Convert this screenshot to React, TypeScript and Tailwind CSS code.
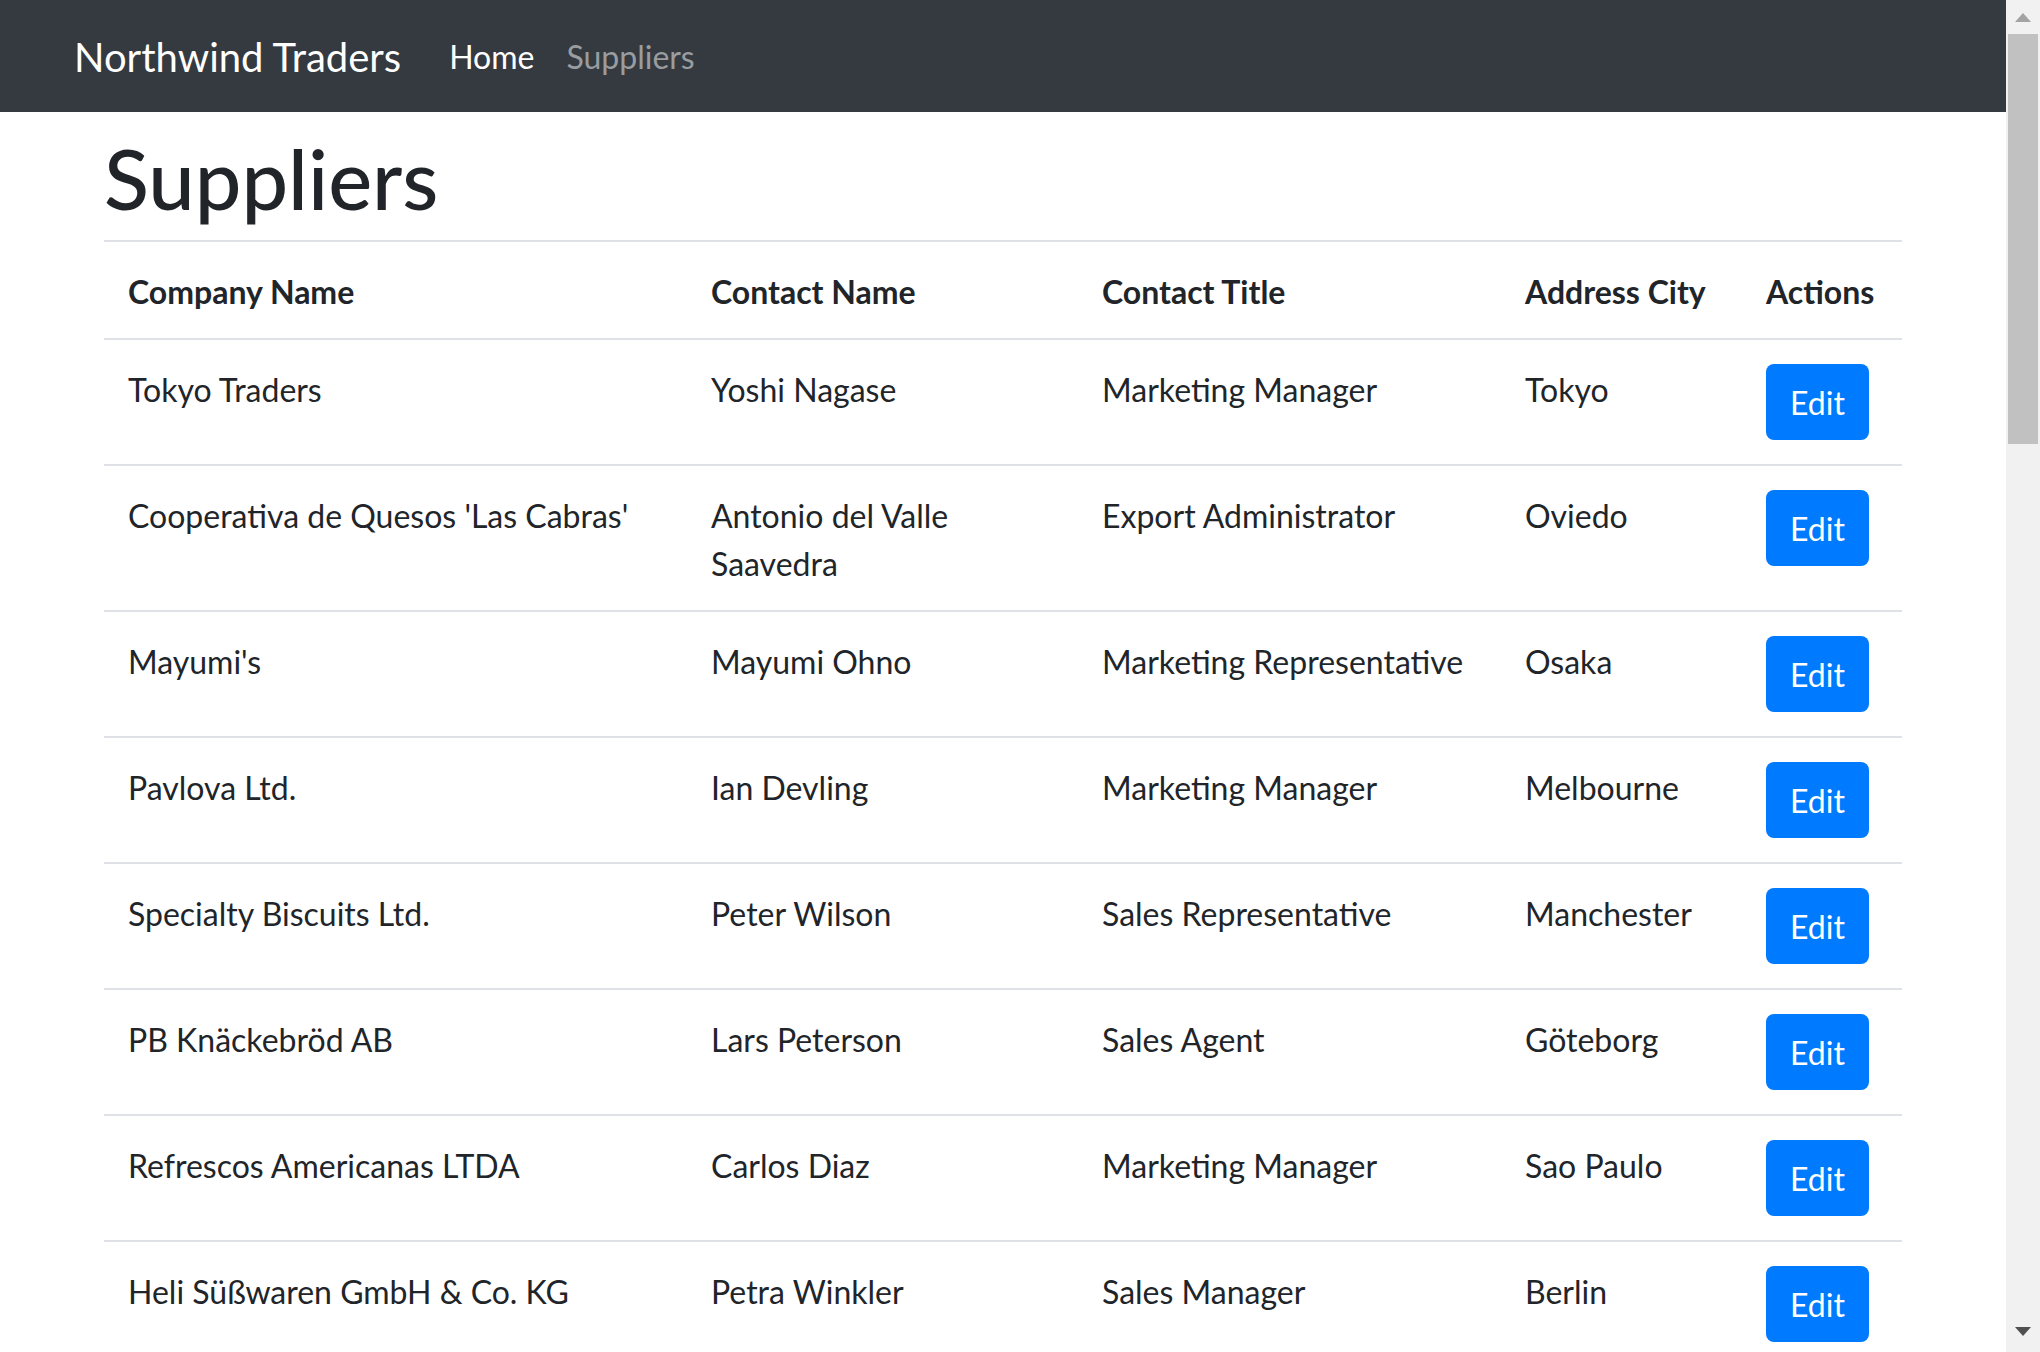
import React from "react";

type Supplier = { company: string; contact: string; title: string; city: string };

const suppliers: Supplier[] = [
  { company: "Tokyo Traders", contact: "Yoshi Nagase", title: "Marketing Manager", city: "Tokyo" },
  { company: "Cooperativa de Quesos 'Las Cabras'", contact: "Antonio del Valle Saavedra", title: "Export Administrator", city: "Oviedo" },
  { company: "Mayumi's", contact: "Mayumi Ohno", title: "Marketing Representative", city: "Osaka" },
  { company: "Pavlova Ltd.", contact: "Ian Devling", title: "Marketing Manager", city: "Melbourne" },
  { company: "Specialty Biscuits Ltd.", contact: "Peter Wilson", title: "Sales Representative", city: "Manchester" },
  { company: "PB Knäckebröd AB", contact: "Lars Peterson", title: "Sales Agent", city: "Göteborg" },
  { company: "Refrescos Americanas LTDA", contact: "Carlos Diaz", title: "Marketing Manager", city: "Sao Paulo" },
  { company: "Heli Süßwaren GmbH & Co. KG", contact: "Petra Winkler", title: "Sales Manager", city: "Berlin" },
];

const grid = "grid grid-cols-[583px_391px_423px_241px_160px]";
const cell = "px-[24px] pt-[26px] pb-[22px]";

function Scrollbar() {
  return (
    <div className="w-[34px] shrink-0 h-full bg-[#f1f1f1] flex flex-col items-center">
      <svg className="mt-[13px]" width="16" height="9" viewBox="0 0 16 9">
        <polygon points="8,0 16,9 0,9" fill="#a3a3a3" />
      </svg>
      <div className="mt-[12px] w-[30px] h-[410px] bg-[#c1c1c1]" />
      <div className="flex-1" />
      <svg className="mb-[16px]" width="16" height="9" viewBox="0 0 16 9">
        <polygon points="0,0 16,0 8,9" fill="#505050" />
      </svg>
    </div>
  );
}

export default function App() {
  return (
    <div className="h-screen w-full flex overflow-hidden bg-white text-[#212529] font-['Lato',_sans-serif]">
      <div className="flex-1 min-w-0 h-full flex flex-col">
        <nav className="h-[112px] shrink-0 bg-[#343a40] flex items-center pl-[74px] pt-[2px]">
          <span className="text-[40px] leading-[60px] text-white mr-[32px]">Northwind Traders</span>
          <a className="text-[32px] leading-[48px] text-white px-[16px]">Home</a>
          <a className="text-[32px] leading-[48px] text-[#9a9da0] px-[16px]">Suppliers</a>
        </nav>
        <main className="pl-[104px]">
          <h1 className="mt-[18px] mb-[14px] text-[83px] leading-[96px] font-medium">Suppliers</h1>
          <div className="w-[1798px] text-[32px] leading-[48px]">
            <div className={`${grid} border-t-2 border-b-2 border-[#dee2e6] font-bold`}>
              <div className={cell}>Company Name</div>
              <div className={cell}>Contact Name</div>
              <div className={cell}>Contact Title</div>
              <div className={cell}>Address City</div>
              <div className={cell}>Actions</div>
            </div>
            {suppliers.map((s) => (
              <div key={s.company} className={`${grid} border-b-2 border-[#dee2e6]`}>
                <div className={cell}>{s.company}</div>
                <div className={cell}>{s.contact}</div>
                <div className={cell}>{s.title}</div>
                <div className={cell}>{s.city}</div>
                <div className="p-[24px]">
                  <button className="h-[76px] px-[24px] pt-[2px] rounded-[8px] bg-[#007bff] text-white text-[32px] leading-[48px]">
                    Edit
                  </button>
                </div>
              </div>
            ))}
          </div>
        </main>
      </div>
      <Scrollbar />
    </div>
  );
}
